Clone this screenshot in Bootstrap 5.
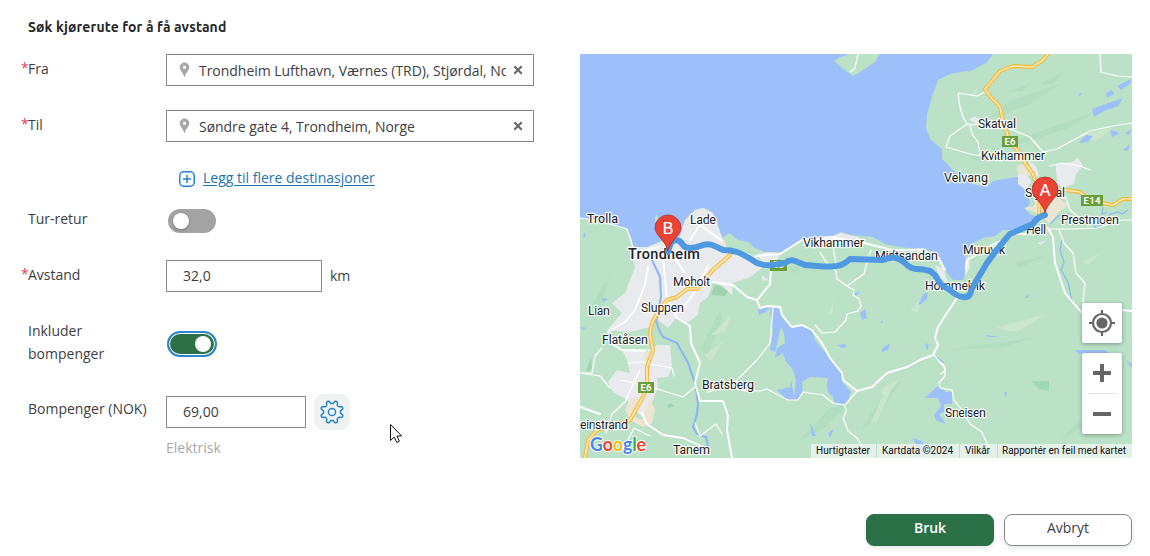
<!DOCTYPE html>
<html lang="no">
<head>
<meta charset="utf-8">
<meta name="viewport" content="width=device-width, initial-scale=1">
<title>Søk kjørerute</title>
<link href="https://cdn.jsdelivr.net/npm/bootstrap@5.3.0/dist/css/bootstrap.min.css" rel="stylesheet">
<style>
body{font-family:"Open Sans","Noto Sans",sans-serif;font-size:14px;line-height:23px;color:#3d3e40;background:#fff;overflow:hidden}
.route-page{width:1150px;height:556px;padding:0 18px 0 28px}
.route-title{font-family:Ubuntu,"Noto Sans",sans-serif;font-size:14px;font-weight:700;line-height:22px;color:#262626;height:54px;padding-top:16px;letter-spacing:.12px}
.route-form{width:552px}
.form-line{height:56px}
.line-label{width:138px;padding-top:3px}
.req{position:relative}
.req::before{content:"*";color:#e0405c;position:absolute;left:-7px;top:-3px}
.field-box{height:32px;border:1px solid #85868a;background:#fff;color:#3d3e40}
.field-text{line-height:30px;padding-top:1px;letter-spacing:-.035px}
.num-text{line-height:30px}
.place-box{width:368px}
.switch{width:48px;height:24px;border-radius:12px;background:#a3a3a3;padding:4px 5px}
.switch i{width:16px;height:16px;border-radius:50%;background:#fff;box-shadow:0 1px 3px #0004}
.switch.on{width:50px;height:26px;margin-left:-1px;border:2px solid #2a86cc;border-radius:13px;background:#2c7048;box-shadow:inset 0 0 0 1px #fff;padding:3px 4px}
.switch.on i{box-shadow:none}
.more-link{color:#1d74b0;text-underline-offset:2px}
.gear-btn{width:36px;height:36px;border-radius:9px;background:#f1f2f3;margin:-2px 0 0 8px}
.route-map{width:552px;height:404px}
.foot-btn{width:128px;height:32px;border-radius:8px;font-size:14px;line-height:26px;padding:0 0 4px;box-shadow:0 2px 4px #0a30401c}
.ok-btn,.ok-btn:hover{background:#2c7048;border-color:#2c7048;color:#fff;font-weight:600}
.cancel-btn{border:1px solid #85868a;color:#3d3e40;background:#fff}
.pointer{position:absolute;left:390px;top:423px}
.lbl{font-family:Roboto,sans-serif;font-size:12.5px;fill:#202124;stroke:#fff;stroke-width:2.6px;stroke-opacity:.85;paint-order:stroke;stroke-linejoin:round}
.shield{font-family:Roboto,sans-serif;font-weight:700;font-size:9.5px;fill:#fff}
.terms{font-family:Roboto,sans-serif;font-size:10px;fill:#111}
.rd{fill:none;stroke:#fff;stroke-linejoin:round;stroke-linecap:round}
</style>
</head>
<body>
<main class="route-page position-relative d-flex flex-column">
<h1 class="route-title m-0">Søk kjørerute for å få avstand</h1>
<div class="d-flex">
<form class="route-form">
  <div class="form-line d-flex">
    <label class="line-label"><span class="req">Fra</span></label>
    <div class="field-box place-box d-flex">
      <svg class="flex-shrink-0" width="32" height="30"><path fill="#a9a9a9" fill-rule="evenodd" d="M17.500 7.500a4.800 4.800 0 0 0-4.800 4.800c0 3.400 3.300 5.100 4.500 9.600h.600c1.200-4.500 4.500-6.200 4.500-9.600a4.800 4.800 0 0 0-4.800-4.800zm0 3.200a1.600 1.600 0 1 1 0 3.200 1.600 1.600 0 0 1 0-3.200z"/></svg>
      <div class="field-text text-nowrap overflow-hidden" style="width:307px">Trondheim Lufthavn, Værnes (TRD), Stjørdal, Norge</div>
      <svg class="flex-shrink-0" width="26" height="30"><path d="M8.300 11.300l7.400 7.400m0-7.400l-7.400 7.400" stroke="#66686b" stroke-width="2.200"/></svg>
    </div>
  </div>
  <div class="form-line d-flex">
    <label class="line-label"><span class="req">Til</span></label>
    <div class="field-box place-box d-flex">
      <svg class="flex-shrink-0" width="32" height="30"><path fill="#a9a9a9" fill-rule="evenodd" d="M17.500 7.500a4.800 4.800 0 0 0-4.800 4.800c0 3.400 3.300 5.100 4.500 9.600h.600c1.200-4.500 4.500-6.200 4.500-9.600a4.800 4.800 0 0 0-4.800-4.800zm0 3.200a1.600 1.600 0 1 1 0 3.200 1.600 1.600 0 0 1 0-3.200z"/></svg>
      <div class="field-text text-nowrap overflow-hidden" style="width:307px">Søndre gate 4, Trondheim, Norge</div>
      <svg class="flex-shrink-0" width="26" height="30"><path d="M8.300 11.300l7.400 7.400m0-7.400l-7.400 7.400" stroke="#66686b" stroke-width="2.200"/></svg>
    </div>
  </div>
  <div class="d-flex" style="height:38px;padding-left:151px">
    <svg class="mt-1 me-2" width="16" height="17" viewBox="0 0 16 17" fill="none" stroke="#2384cb" stroke-width="1.500"><rect x=".75" y="1.750" width="14.500" height="14.500" rx="4"/><path d="M8 5v8M4 9h8"/></svg>
    <a href="#" class="more-link">Legg til flere destinasjoner</a>
  </div>
  <div class="form-line d-flex">
    <label class="line-label">Tur-retur</label>
    <span class="switch d-flex" style="margin:5px 0 0 2px"><i></i></span>
  </div>
  <div class="form-line d-flex">
    <label class="line-label"><span class="req">Avstand</span></label>
    <div class="field-box ps-3" style="width:156px"><div class="num-text">32,0</div></div>
    <span class="ms-2 pt-1">km</span>
  </div>
  <div class="d-flex" style="height:80px">
    <label class="line-label">Inkluder<br>bompenger</label>
    <span class="switch on d-flex justify-content-end" style="margin:15px 0 0 1px"><i></i></span>
  </div>
  <div class="d-flex">
    <label class="line-label" style="padding-top:1px">Bompenger (NOK)</label>
    <div>
      <div class="d-flex" style="height:34px">
        <div class="field-box ps-3" style="width:140px"><div class="num-text">69,00</div></div>
        <span class="gear-btn d-flex align-items-center justify-content-center">
          <svg width="26" height="26" viewBox="-13 -13 26 26" fill="none" stroke="#2384cb" stroke-width="1.500" stroke-linejoin="round"><circle r="3.600"/><path id="gear" d=""/></svg>
        </span>
      </div>
      <div style="color:#a9a9a9;padding-top:6px">Elektrisk</div>
    </div>
  </div>
</form>
<svg class="route-map flex-shrink-0" viewBox="580 54 552 404">
  <rect x="580" y="54" width="552" height="404" fill="#9dc0fa"/>
  <g fill="#bbe2c6">
    <path d="M834 61L841 57 850 54H880L875 62 863 70 853 76 845 70Z"/>
    <path d="M580 218L594 220 614 225 627 229 631 240 634 250 650 247 660 241 680 236 684 222 690 214 697 209 704 208 712 212 717 220 722 238 729 233 738 240 748 242 755 248 765 252 782 252 795 244 806 239 818 237 830 237 841 232 850 235 862 236 873 237 885 244 900 247 908 248 925 249 938 253 941 260 947 273 953 280 963 280 968 267 965 255 973 243 983 238 995 236 1003 230 1012 230 1030 224 1037 217 1030 214 1025 209 1030 204 1028 191 1022 187 1018 177 1010 178 993 181 987 187 973 184 955 172 942 159 942 149 930 139 926 128 927 115 930 104 933 94 938 80 950 74 973 70 986 63 993 54H1132V458H580Z"/>
    <path d="M655 217l2-3 1 6-3 3z"/>
  </g>
  <g fill="#a9d8b8" opacity=".45">
    <path d="M988 118L1010 101 1062 83 1030 104 1005 114ZM1000 146l60-22 38-13-32 18-50 16zM1010 92l22-10-10 9zM1040 85l22-13-8 12zM965 155l30 4-14 3zM590 310l10-20 10-14-10 32zM700 350l20-40 2 10-14 34zM790 270l14-10-8 14zM1060 440l20-20 4 6zM860 430l24-34 18-16-28 42zM1015 262l30-6-26 12zM945 350l60-8 30-5-32 10zM800 440l30-32 20-4-26 24z"/>
    <path d="M714 286l12-3 4 5-5 8-14-1zM587 368l4-10 1 10-4 5zM667 405l4-2 3 3-5 2z" fill="#7cc096"/>
  </g>
  <path d="M1031 381h18v10l-10-2z" fill="#9fd8b2"/>
  <g fill="#d0ead2" opacity=".7">
    <path d="M740 268l24-10-14 14zM710 336l22-22-8 18zM705 355l18-14-12 20zM880 390l20-12-15 20zM870 425l11-26 10-8-14 30zM996 328l50-14-30 18zM1082 262l18-8-12 11zM969 95l10-9-4 10zM1080 135l34-8-18 14zM910 310l14-14-6 16zM828 315l6-16-2 16z"/>
  </g>
  <g fill="#e8eaed">
    <path d="M630 247L647 247 658 243 680 237 685 220 695 210 703 208 713 213 718 227 723 240 725 247 740 250 757 257 762 268 750 277 733 283 732 295 723 287 713 282 708 297 700 303 698 315 687 323 677 317 668 328 658 320 660 313 650 327 630 332 607 330 622 313 612 303 625 293 635 267Z"/>
    <path d="M622 350L647 352 657 345 670 345 672 367 668 377 657 378 658 387 648 413 642 417 627 400 613 392 608 382 617 370 630 373 627 360Z"/>
    <path d="M757 254L770 252 780 254 776 262 764 264ZM802 246L812 238 830 237 841 233 858 237 864 242 850 243 832 244 815 247ZM913 249L922 248 930 252 927 255ZM935 265L943 268 948 283 940 278ZM965 262L969 256 970 268 965 276ZM1028 160L1036 166 1039 176 1034 178ZM1018 174L1027 174 1031 182 1026 190 1018 184ZM1056 165L1072 162 1078 158 1083 166 1076 174 1074 184 1064 188 1058 184 1056 172ZM969 119l6-3 6 5-5 3zM1037 243l9-3-5 5zM762 275l6 5-6 1z"/>
  </g>
  <g fill="#ede5d4"><path d="M1017 166L1024 164 1031 175 1026 176 1018 173ZM1024 208L1034 206 1036 200 1042 204 1056 196 1068 205 1058 213 1050 224 1044 218 1034 212ZM644 352l6 0-2 8-4 2zM722 240l3 0 1 7-4 0zM630 398L640 397 635 417 642 420 650 397 655 410 652 423 643 427 630 420 625 410Z"/></g>
  <g fill="#9dc0fa">
    <path d="M770 308L781 307 782 317 790 327 800 326 812 330 815 340 823 350 832 360 842 373 843 383 851 392 847 404 835 404 833 397 828 392 827 385 828 378 810 377 802 382 803 393 797 400 787 400 777 390 790 387 791 380 794 396 796 380 793 370 785 360 783 353 775 358 777 348 785 343 784 333 781 327 775 352 770 350 773 333 771 317Z"/>
    <path d="M758 309L770 307 766 312 759 315ZM930 393L938 386 946 392 952 392 952 404 944 404 944 412 939 414 946 424 936 420 934 415 941 406 938 398 924 398ZM1092 109l22-8 9-3-5 8-14 5-10 6zM1106 94l5-4 4 3-8 5zM1117 86l14-7v4l-10 7zM1079 142l7-7 7 1-5 6-8 1zM1110 130l10 3-8 4zM1125 133l7-4-3 6zM1123 150l7-6-2 7zM1078 94l5-1-3 3zM967 69l8-1-6 4zM918 305l6-12 4 0-1 6-6 5zM860 313l5-4 2 9-5 2zM882 349l8-6-2 7-6 2zM925 343l4 2-2 6zM837 345l8-1 2 3-5 1zM810 422l6 14-4 0zM828 433l6-4-4 9zM912 438l10 3 4 6-1 10-9-13zM1075 350l30 0 6 4-32 0zM1025 298l4-4-1 4zM986 335l14 2-12 0zM1004 392l3 0-1 6zM1030 417l2 5zM1126 360l6 4v5zM580 326l6 2-3 2zM602 298l6 1-5 4zM584 232l2 4-3 3zM880 322l3-2-1 3zM854 293l6-1-4 4z"/>
    <path d="M652 260L660 277 661 297 656 320 659 330 663 337 677 343 688 363 695 383 698 403 697 414 693 427 697 434 706 437 709 450" fill="none" stroke="#8db4f2" stroke-width="2"/>
    <path d="M1050 224L1058 216 1070 214M1070 219L1082 222 1090 221 1096 228 1106 223 1110 214 1118 212 1122 214 1128 210M1103 207L1102 214 1107 212M1062 240L1060 250 1064 262 1061 270 1068 282 1072 302M933 355L944 363" fill="none" stroke="#8fb9ef" stroke-width="1.300"/>
  </g>
  <g class="rd" stroke-width="1.200">
    <path d="M580 218L594 220 614 225 627 229 631 240 634 252M858 54L855 68 850 72M1100 54L1101 72 1117 76 1132 77M985 92L977 96 958 93 960 107 963 117 967 124 950 136 946 147 970 154 983 156M967 124L980 125M970 125L972 134 978 142 980 155M1010 129L1030 137 1043 152 1057 149 1090 131 1113 126 1132 123M1050 166L1062 163 1080 166 1090 170M773 308L770 343 757 360 730 387 707 392M730 387L745 391 760 391 767 389 780 396 788 400 798 400 803 392 823 395 833 403 845 405 857 391M845 405L846 412 843 418 848 431 857 438 862 446M655 388L670 393 683 397 695 387M580 373L592 373 595 356 602 348M580 373L600 376 610 388M606 433L612 414 625 402 640 370M628 350L650 350M628 363L645 362M620 380L640 384M650 364L672 368 674 376M628 440L634 428 650 436M695 423L700 436 716 424 722 434"/>
    <path d="M815 325L822 333 835 332 846 320 847 314 858 311 861 306 859 299 853 295 854 290 847 286 837 279 836 271 826 262 820 252M847 286L864 274 867 262 871 250M934 355L940 362 945 368 945 376 939 383 940 388 952 390 954 400 962 410 970 424 982 432 988 446M940 362C947 366 946 372 940 374M1059 230L1064 243 1073 253 1076 273 1085 283 1083 302M1050 229L1073 229 1097 228 1122 220 1132 220M1063 190L1070 210 1080 218M833 247L836 264"/>
  </g>
  <g class="rd" stroke-width="1.900">
    <path d="M713 282L733 285 747 297 757 300 760 308 767 306 780 307 782 315 792 327 802 325 812 330 822 343 830 358 842 373 843 380 857 391 872 387 887 373 907 367 920 360 933 355 938 345 935 338 938 327 945 316 957 298M771 268L770 284 758 299M1048 228L1053 237 1055 263 1065 293 1082 313M1122 310L1132 311M580 407L600 414M648 267L645 285 635 310 625 322 608 332M663 258L667 300 677 318 690 326 691 343 700 363 695 383 700 401 723 401 728 416 727 430 732 458M670 300L660 308M708 266L695 292 680 312M676 260L684 272M690 240L700 225 722 241M642 413L647 424 663 435 683 438 710 450M633 252L660 247M756 256L780 254 802 240 830 237 864 243 892 250 920 250 938 257 945 270M966 270L967 260 978 254 992 245 1015 234 1030 234M612 344L622 350 645 351"/>
  </g>
  <g fill="none" stroke-linejoin="round" stroke-linecap="round">
    <path stroke="#f4b83d" stroke-width="4" d="M585 458L588 440 597 430 612 426 630 420 643 397 647 387 647 367 653 350 650 333 652 323 660 308 667 300 677 297 687 289 697 289 713 270 730 255M1048 54L1042 61 1032 67 1013 66 1000 71 992 81 985 89 989 95 1000 107 1003 121 1010 142 1018 151 1025 163 1033 174 1040 194 1039 214M1065 190L1080 192 1090 201 1113 205 1123 199H1132"/>
    <path stroke="#feeab0" stroke-width="1.700" d="M585 458L588 440 597 430 612 426 630 420 643 397 647 387 647 367 653 350 650 333 652 323 660 308 667 300 677 297 687 289 697 289 713 270 730 255M1048 54L1042 61 1032 67 1013 66 1000 71 992 81 985 89 989 95 1000 107 1003 121 1010 142 1018 151 1025 163 1033 174 1040 194 1039 214M1065 190L1080 192 1090 201 1113 205 1123 199H1132"/>
  </g>
  <g fill="#689f38"><path d="M638 382h16v11h-16zM1002 136h16v11h-16zM1081 195h22v11h-22zM770 260h17v11h-17z"/></g>
  <g class="shield"><text x="640.500" y="391" textLength="11">E6</text><text x="1004.500" y="145" textLength="11">E6</text><text x="1083.500" y="204" textLength="17">E14</text><text x="773" y="268" textLength="11">E6</text></g>
  <g class="lbl">
    <text x="587" y="223" textLength="31">Trolla</text><text x="690" y="224" textLength="26">Lade</text>
    <text x="628" y="258.500" textLength="72" font-weight="500" style="font-size:14.500px">Trondheim</text>
    <text x="673" y="285.500" textLength="37">Moholt</text><text x="641" y="311.500" textLength="43">Sluppen</text>
    <text x="588" y="314.500" textLength="22">Lian</text><text x="602" y="343.500" textLength="46">Flatåsen</text>
    <text x="702" y="388.500" textLength="52">Bratsberg</text><text x="580" y="428.500" textLength="48">einstrand</text><text x="673" y="453.500" textLength="37">Tanem</text>
    <text x="803" y="246.500" textLength="61">Vikhammer</text><text x="875" y="259.500" textLength="63">Midtsandan</text>
    <text x="925" y="289.500" textLength="60">Hommelvik</text><text x="963" y="253.500" textLength="42">Muruvik</text>
    <text x="944" y="181.500" textLength="44">Velvang</text><text x="978" y="127.500" textLength="38">Skatval</text><text x="981" y="159.500" textLength="64">Kvithammer</text>
    <text x="1025" y="196.500" textLength="40">Stjørdal</text><text x="1026" y="233.500" textLength="20">Hell</text>
    <text x="1061" y="223.500" textLength="58">Prestmoen</text><text x="945" y="416.500" textLength="41">Sneisen</text>
  </g>
  <path d="M668 252L670 245Q672 240 676 240T683 245Q685 248 690 248T700 246Q707 243 712 245T723 250Q731 250 737 252T757 263Q765 266 773 265L785 263Q790 259 795 261T805 265L823 266.500Q836 267 841 265T850 259L883 260Q891 257 896 258T906 264Q911 269 917 269T930 271Q935 274 938 280T950 290Q956 296 963 297T971 291L975 283 987 263Q1000 245 1010 234L1033 224Q1037 217 1045 215" fill="none" stroke="#4f99e3" stroke-width="6" stroke-linecap="round" stroke-linejoin="round"/>
  <g fill="#ea4335" stroke="#b52c24" stroke-width=".8">
    <path d="M668 251c-2-10-13-16-13-23a13 13 0 0 1 26 0c0 7-11 13-13 23z"/><path d="M1045 213c-2-10-13-16-13-23a13 13 0 0 1 26 0c0 7-11 13-13 23z"/>
  </g>
  <g font-family="Liberation Sans,sans-serif" font-size="16" fill="#fff" stroke="#fff" stroke-width=".2" text-anchor="middle"><text x="668" y="234">B</text><text x="1045" y="196">A</text></g>
  <g font-family="Lato,sans-serif" font-size="19.500" font-weight="700" style="paint-order:stroke" stroke="#fff" stroke-width="2"><text x="590" y="451" textLength="56" lengthAdjust="spacingAndGlyphs"><tspan fill="#4285f4">G</tspan><tspan fill="#ea4335">o</tspan><tspan fill="#fbbc05">o</tspan><tspan fill="#4285f4">g</tspan><tspan fill="#34a853">l</tspan><tspan fill="#ea4335">e</tspan></text></g>
  <path d="M811 444h321v14H811z" fill="#f5f5f5" opacity=".72"/>
  <path d="M876.500 444v14M959.500 444v14M997.500 444v14" stroke="#bbe2c6"/>
  <g class="terms"><text x="816" y="454" textLength="54">Hurtigtaster</text><text x="882" y="454" textLength="71">Kartdata ©2024</text><text x="965" y="454" textLength="25">Vilkår</text><text x="1002" y="454" textLength="124">Rapportér en feil med kartet</text></g>
  <g fill="#fff" style="filter:drop-shadow(0 1px 2px #0005)"><rect x="1082" y="303" width="40" height="40" rx="2"/><rect x="1082" y="353" width="40" height="81" rx="2"/></g>
  <path d="M1087 393.500h30" stroke="#e3e3e3"/>
  <g fill="none" stroke="#666"><circle cx="1102" cy="323" r="9" stroke-width="2.200"/><circle cx="1102" cy="323" r="5.600" fill="#666" stroke="none"/><path stroke-width="2.200" d="M1102 310v5m0 16v5m-13-13h5m16 0h5"/><path stroke-width="4" d="M1093 373h18M1102 364v18M1093 414h18"/></g>
</svg>
</div>
<div class="d-flex justify-content-end" style="gap:10px;padding-top:55px">
  <button class="btn foot-btn ok-btn">Bruk</button><button class="btn foot-btn cancel-btn">Avbryt</button>
</div>
<svg class="pointer" width="14" height="22"><path d="M.5 1.500v16l3.700-3.400 2.600 5.400 2.600-1.200-2.400-5.200 4.600-.2z" fill="#fff" stroke="#111" stroke-width="1"/></svg>
</main>
<script src="https://cdn.jsdelivr.net/npm/bootstrap@5.3.0/dist/js/bootstrap.bundle.min.js"></script>
<script>
// Eight rounded teeth for the settings gear
const pts=[];
for(let d=0;d<360;d+=3){
  const a=d*Math.PI/180, r=10-1.55*Math.tanh(2*Math.cos(8*a)+.3);
  pts.push((r*Math.cos(a)).toFixed(2)+' '+(r*Math.sin(a)).toFixed(2));
}
document.getElementById('gear').setAttribute('d','M'+pts.join('L')+'Z');
</script>
</body>
</html>
